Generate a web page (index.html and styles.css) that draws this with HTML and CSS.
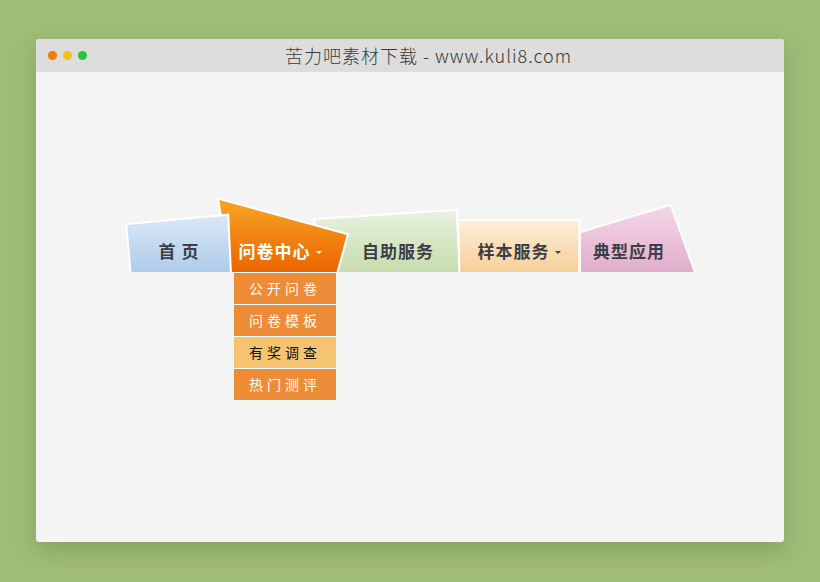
FILE: index.html
```html
<!DOCTYPE html>
<html lang="zh">
<head>
<meta charset="utf-8">
<title>苦力吧素材下载</title>
<link rel="stylesheet" href="styles.css">
</head>
<body>
<div class="window">
  <div class="titlebar">
    <div class="dots"><span class="dot d1"></span><span class="dot d2"></span><span class="dot d3"></span></div>
    <div class="title">苦力吧素材下载 - www.kuli8.com</div>
  </div>
  <div class="content">
    <ul class="nav">
      <li class="tab t1">
        <svg class="shape" width="162" height="84" viewBox="-30 -10 162 84">
          <defs><linearGradient id="g1" x1="0" y1="0" x2="0" y2="1"><stop offset="0" stop-color="#dae8f6"/><stop offset="1" stop-color="#adcbeb"/></linearGradient></defs>
          <polygon points="-0.7,27 99.3,17.7 102,76 3.7,76" fill="url(#g1)" stroke="#fff" stroke-width="4" paint-order="stroke"/>
        </svg>
        <a class="label">首 页</a>
      </li>
      <li class="tab t2">
        <svg class="shape" width="168" height="84" viewBox="-30 -10 168 84">
          <defs><linearGradient id="g2" x1="0" y1="0" x2="0" y2="1"><stop offset="0" stop-color="#f6a524"/><stop offset="1" stop-color="#ec6300"/></linearGradient></defs>
          <polygon points="-10.7,2 116.7,37 106,76 1.7,76" fill="url(#g2)" stroke="#fff" stroke-width="4" paint-order="stroke"/>
        </svg>
        <a class="label active">问卷中心<span class="caret"></span></a>
        <ul class="dropdown">
          <li class="item">公开问卷</li>
          <li class="item">问卷模板</li>
          <li class="item hot">有奖调查</li>
          <li class="item">热门测评</li>
        </ul>
      </li>
      <li class="tab t3">
        <svg class="shape" width="180" height="84" viewBox="-30 -10 180 84">
          <defs><linearGradient id="g3" x1="0" y1="0" x2="0" y2="1"><stop offset="0" stop-color="#e9f1df"/><stop offset="1" stop-color="#c4dcaa"/></linearGradient></defs>
          <polygon points="-23,22 117.7,13 121,76 -2,76" fill="url(#g3)" stroke="#fff" stroke-width="4" paint-order="stroke"/>
        </svg>
        <a class="label">自助服务</a>
      </li>
      <li class="tab t4">
        <svg class="shape" width="182" height="84" viewBox="-30 -10 182 84">
          <defs><linearGradient id="g4" x1="0" y1="0" x2="0" y2="1"><stop offset="0" stop-color="#fdeed9"/><stop offset="1" stop-color="#f6ce97"/></linearGradient></defs>
          <polygon points="1,23 120.3,23 120.3,76 2.5,76" fill="url(#g4)" stroke="#fff" stroke-width="4" paint-order="stroke"/>
        </svg>
        <a class="label">样本服务<span class="caret"></span></a>
      </li>
      <li class="tab t5">
        <svg class="shape" width="176" height="84" viewBox="-30 -10 176 84">
          <defs><linearGradient id="g5" x1="0" y1="0" x2="0" y2="1"><stop offset="0" stop-color="#f3d7e7"/><stop offset="1" stop-color="#e0adca"/></linearGradient></defs>
          <polygon points="1,35 90,8 114.5,76 1,76" fill="url(#g5)" stroke="#fff" stroke-width="4" paint-order="stroke"/>
        </svg>
        <a class="label">典型应用</a>
      </li>
    </ul>
  </div>
</div>
</body>
</html>
```
FILE: styles.css
```css
* { box-sizing: border-box; }
html, body { margin: 0; padding: 0; }
body {
  background: #a0bd78;
  padding: 39px 36px 40px;
  font-family: "Noto Sans CJK SC", "Noto Sans", sans-serif;
}
.window {
  width: 748px;
  height: 503px;
  background: #f4f4f4;
  border-radius: 3px;
  box-shadow: 0 8px 22px rgba(40, 70, 20, 0.22);
  overflow: hidden;
}
.titlebar {
  height: 33px;
  background: #dddddd;
  display: flex;
  align-items: center;
  padding-left: 12px;
}
.dots { display: flex; gap: 6px; }
.dot { width: 9px; height: 9px; border-radius: 50%; display: block; }
.d1 { background: #f57a00; }
.d2 { background: #efc31a; }
.d3 { background: #2dc33b; }
.title {
  flex: 1;
  text-align: center;
  font-size: 18px;
  color: #3a3a3a;
  line-height: 33px;
  padding-right: 14px;
  letter-spacing: 1px;
  font-weight: 300;
}
.content {
  padding-top: 126px;
  padding-left: 92px;
}
.nav {
  list-style: none;
  margin: 0;
  padding: 0;
  display: flex;
  height: 74px;
}
.tab {
  position: relative;
  height: 74px;
  padding-top: 43px;
  line-height: 20px;
  font-size: 17px;
  font-weight: bold;
  text-align: center;
}
.shape {
  position: absolute;
  left: -30px;
  top: -10px;
}
.t1 { width: 102px; z-index: 3; }
.t2 { width: 108px; z-index: 2; padding-right: 8px; }
.t3 { width: 120px; z-index: 1; }
.t4 { width: 122px; z-index: 1; }
.t5 { width: 116px; z-index: 1; padding-right: 18px; }
.label {
  position: relative;
  z-index: 1;
  color: #3d3d48;
  letter-spacing: 1px;
  cursor: pointer;
}
.label.active { color: #fff; }
.caret {
  display: inline-block;
  width: 0;
  height: 0;
  border-left: 3px solid transparent;
  border-right: 3px solid transparent;
  border-top: 3px solid currentColor;
  vertical-align: middle;
  margin-left: 5px;
  margin-top: -2px;
}
.dropdown {
  position: absolute;
  left: 4px;
  top: 74px;
  width: 102px;
  list-style: none;
  margin: 0;
  padding: 0;
}
.item {
  height: 32px;
  border-top: 1px solid #fff;
  background: #ed8b36;
  color: #fff;
  font-size: 14px;
  font-weight: normal;
  line-height: 31px;
  letter-spacing: 4px;
  text-align: center;
}
.item.hot {
  background: #f6c371;
  color: #111;
}
```
